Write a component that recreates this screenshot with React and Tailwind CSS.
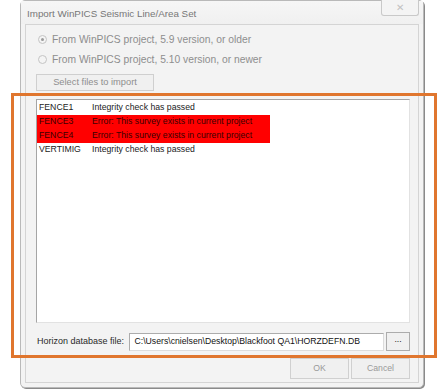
const rows = [
  { name: "FENCE1", msg: "Integrity check has passed", err: false },
  { name: "FENCE3", msg: "Error: This survey exists in current project", err: true },
  { name: "FENCE4", msg: "Error: This survey exists in current project", err: true },
  { name: "VERTIMIG", msg: "Integrity check has passed", err: false },
];

function Radio({ checked, label }) {
  return (
    <div className="flex h-[11px] items-center gap-[5px] text-[10.3px] text-[#8e8e8e]">
      <span className="flex h-[9px] w-[9px] items-center justify-center rounded-full border border-[#c4c4c4] bg-[#f4f4f4]">
        {checked && <span className="h-[3px] w-[3px] rounded-full bg-[#9a9a9a]" />}
      </span>
      <span>{label}</span>
    </div>
  );
}

export default function App() {
  return (
    <div
      className="relative h-[392px] w-[446px] overflow-hidden bg-white text-[8.7px] text-[#222]"
      style={{ fontFamily: '"Liberation Sans", Arial, sans-serif' }}
    >
      <div className="ml-[20px] flex h-[388px] w-[404px] flex-col rounded-[5px] border border-[#b9b9b9] bg-[#f3f3f3] shadow-[1px_1px_0_#8a8a8a]">
        {/* title bar */}
        <div className="relative flex h-[23px] items-center bg-gradient-to-b from-[#f6f6f6] to-[#f0f0f0] pl-[6px] pt-[3px] text-[9.8px] text-[#777]">
          Import WinPICS Seismic Line/Area Set
          <div className="absolute right-[4px] top-[-1px] flex h-[16px] w-[38px] items-center justify-center rounded-b-[3px] border border-t-0 border-[#c9c9c9] bg-[#f4f4f4] text-[10px] text-[#c2c2c2]">
            ✕
          </div>
        </div>
        {/* client */}
        <div className="mx-[4px] mb-[4px] flex flex-1 flex-col border border-[#d4d4d4] bg-[#f3f3f3] pl-[10px] pr-[8px]">
          <div className="mt-[9px] flex flex-col gap-[9px] pl-[2px]">
            <Radio checked label="From WinPICS project, 5.9 version, or older" />
            <Radio label="From WinPICS project, 5.10 version, or newer" />
          </div>
          <div className="mt-[9px] flex h-[17px] w-[118px] items-center justify-center border border-[#cfcfcf] bg-[#f0f0f0] text-[9.3px] text-[#8e8e8e]">
            Select files to import
          </div>
          <div className="mt-[8px] h-[224px] border border-[#a5a5a5] border-r-[#e2e2e2] border-b-[#e2e2e2] bg-white pt-[1px]">
            {rows.map((r) => (
              <div
                key={r.name}
                className={`flex h-[14px] w-[233px] items-center ${r.err ? "bg-[#ff0000] text-[#3a0000]" : ""}`}
              >
                <span className="w-[55px] pl-[2px]">{r.name}</span>
                <span>{r.msg}</span>
              </div>
            ))}
          </div>
          <div className="mt-[9px] flex items-center">
            <span className="w-[94px] pl-[1px] text-[9px] text-[#2a2a2a]">Horizon database file:</span>
            <div className="flex h-[18px] w-[256px] items-center border border-[#acacac] border-r-[#dcdcdc] border-b-[#dcdcdc] bg-white pl-[4px] text-[#111]">
              C:\Users\cnielsen\Desktop\Blackfoot QA1\HORZDEFN.DB
            </div>
            <div className="ml-[2px] flex h-[19px] w-[24px] items-center justify-center border border-[#acacac] bg-[#f0f0f0] pb-[4px]">
              ...
            </div>
          </div>
          <div className="mt-[7px] flex justify-end gap-[2px]">
            <div className="flex h-[21px] w-[59px] items-center justify-center border border-[#d0d0d0] bg-[#f0f0f0] text-[#9a9a9a]">
              OK
            </div>
            <div className="flex h-[21px] w-[59px] items-center justify-center border border-[#d0d0d0] bg-[#f0f0f0] text-[#9a9a9a]">
              Cancel
            </div>
          </div>
        </div>
      </div>
      {/* highlight overlay */}
      <div className="pointer-events-none absolute left-[11px] top-[93px] h-[265px] w-[426px] border-[3px] border-[#e0762e]" />
    </div>
  );
}
